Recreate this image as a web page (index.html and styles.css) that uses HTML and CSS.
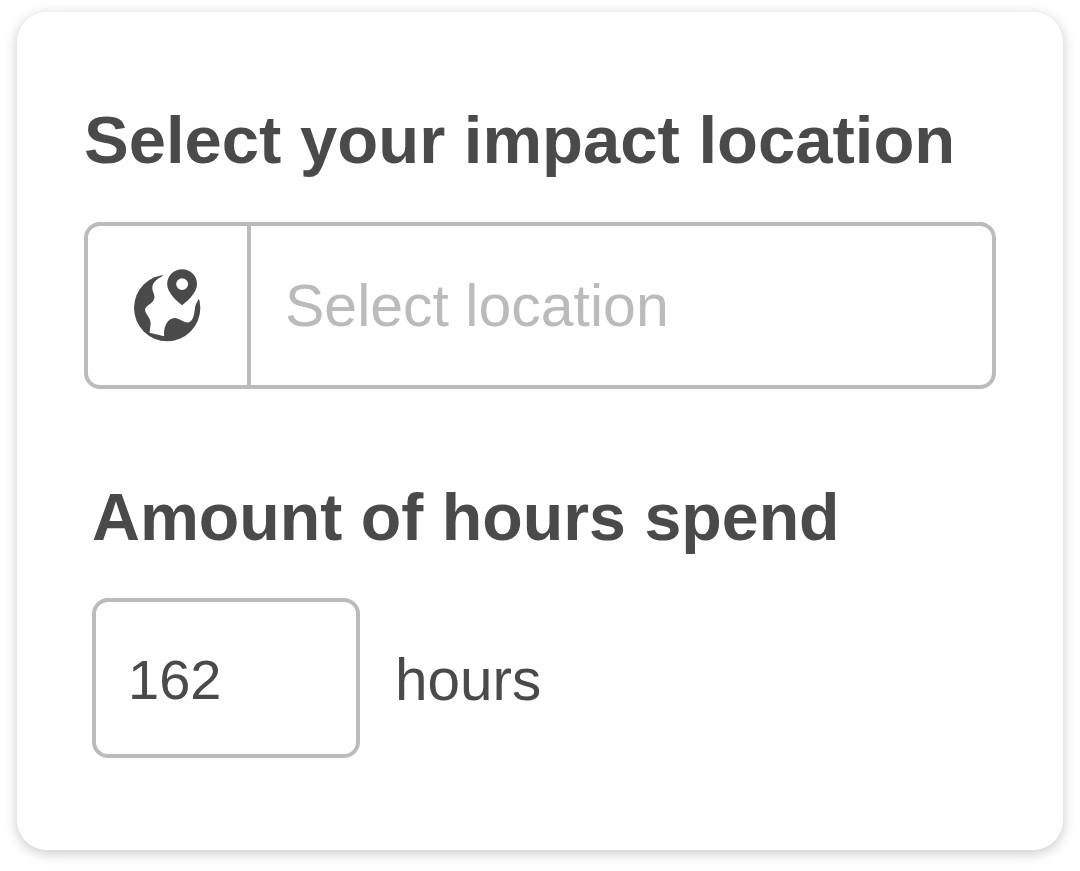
FILE: index.html
```html
<!DOCTYPE html>
<html lang="en">
<head>
    <meta charset="UTF-8">
    <title>Impact location</title>
    <link rel="stylesheet" href="styles.css">
</head>
<body>
    <main class="card">
        <section class="location">
            <h2 class="location-title">Select your impact location</h2>
            <div class="location-field">
                <div class="location-icon">
                    <svg class="globe" viewBox="150 140 205 225" aria-hidden="true">
                        <circle cx="250" cy="260" r="100" fill="#4a4a4a"/>
                        <path fill="#fff" d="M237 150L237 163C222 172 205 182 205 200C205 215 218 222 208 238C200 250 186 252 183 265C185 280 202 290 200 310L197 335L241 345C238 318 250 292 272 290C288 290 300 306 316 303C330 298 332 275 334 258C336 248 342 238 348 230L370 150Z"/>
                        <path fill="#4a4a4a" fill-rule="evenodd" d="M295 143C270 143 250 163 250 188C250 215 280 240 295 252C310 240 340 215 340 188C340 163 320 143 295 143ZM295 170A18 18 0 1 1 295 206A18 18 0 1 1 295 170Z"/>
                    </svg>
                </div>
                <input class="location-input" type="text" placeholder="Select location">
            </div>
        </section>
        <section class="hours">
            <h2 class="hours-title">Amount of hours spend</h2>
            <div class="hours-row">
                <input class="hours-input" type="text" value="162">
                <span class="hours-unit">hours</span>
            </div>
        </section>
    </main>
</body>
</html>
```

FILE: styles.css
```css
* {
    margin: 0;
    padding: 0;
    box-sizing: border-box;
}
:root {
    --text-color: #4a4a4a;
    --border-color: #bbbbbb;
}
body {
    font-family: 'Liberation Sans', Arial, sans-serif;
    background-color: white;
    color: var(--text-color);
    padding: 12px 17px 21px;
}
.card {
    height: 838px;
    background-color: white;
    border-radius: 30px;
    box-shadow: 0 3px 13px rgba(0, 0, 0, 0.22);
    padding: 92px 67px 0;
}
h2 {
    line-height: 72px;
    font-weight: 700;
}
.location-title {
    font-size: 67px;
}
.hours-title {
    font-size: 66.3px;
}
.location-field {
    display: flex;
    height: 167px;
    margin-top: 46px;
    border: 4px solid var(--border-color);
    border-radius: 16px;
    width: 912px;
}
.location-icon {
    flex: none;
    width: 163px;
    display: flex;
    align-items: center;
    justify-content: center;
    border-right: 4px solid var(--border-color);
}
.globe {
    width: 68px;
    height: 75px;
}
.location-input {
    flex: 1;
    min-width: 0;
    border: none;
    outline: none;
    background: none;
    padding-left: 34px;
    font-family: inherit;
    font-size: 59px;
    color: var(--text-color);
}
.location-input::placeholder {
    color: var(--border-color);
    opacity: 1;
}
.hours {
    margin-top: 92px;
    padding-left: 8px;
}
.hours-row {
    display: flex;
    align-items: center;
    gap: 35px;
    margin-top: 45px;
}
.hours-input {
    width: 268px;
    height: 160px;
    border: 4px solid var(--border-color);
    border-radius: 16px;
    outline: none;
    padding: 2px 0 0 32px;
    font-family: inherit;
    font-size: 56px;
    color: var(--text-color);
}
.hours-unit {
    padding-top: 2px;
    font-size: 58.5px;
}
```
